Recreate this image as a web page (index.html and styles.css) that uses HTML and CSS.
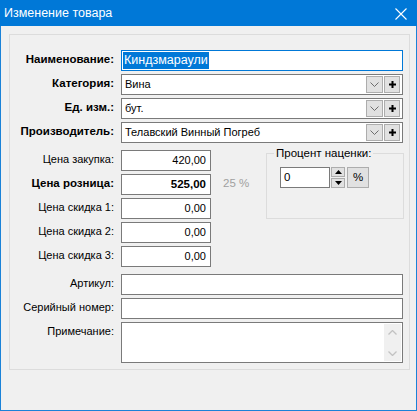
FILE: index.html
```html
<!DOCTYPE html>
<html lang="ru">
<head>
    <meta charset="UTF-8">
    <title>Изменение товара</title>
    <link rel="stylesheet" href="styles.css">
</head>
<body>

    <div class="window">
        <!-- Title bar -->
        <div class="titlebar">
            <span class="title">Изменение товара</span>
            <svg class="close" width="12" height="12" viewBox="0 0 12 12">
                <path d="M0.5 0.5 L11.5 11.5 M11.5 0.5 L0.5 11.5" stroke="#fff" stroke-width="1.1" fill="none"/>
            </svg>
        </div>

        <div class="group">
            <!-- Main fields -->
            <div class="form-rows">
                <div class="lbl bold">Наименование:</div>
                <div class="field focus"><span class="sel">Киндзмараули</span></div>

                <div class="lbl bold">Категория:</div>
                <div class="field combo">
                    <span class="val">Вина</span>
                    <span class="dd"><svg width="9" height="5" viewBox="0 0 9 5"><path d="M0.5 0.5 L4.5 4.5 L8.5 0.5" stroke="#6d6d6d" fill="none"/></svg></span>
                    <span class="plus"><svg width="7" height="7" viewBox="0 0 7 7"><path d="M0 2.5h7v2H0z M2.5 0h2v7h-2z" fill="#000"/></svg></span>
                </div>

                <div class="lbl bold">Ед. изм.:</div>
                <div class="field combo">
                    <span class="val">бут.</span>
                    <span class="dd"><svg width="9" height="5" viewBox="0 0 9 5"><path d="M0.5 0.5 L4.5 4.5 L8.5 0.5" stroke="#6d6d6d" fill="none"/></svg></span>
                    <span class="plus"><svg width="7" height="7" viewBox="0 0 7 7"><path d="M0 2.5h7v2H0z M2.5 0h2v7h-2z" fill="#000"/></svg></span>
                </div>

                <div class="lbl bold">Производитель:</div>
                <div class="field combo">
                    <span class="val">Телавский Винный Погреб</span>
                    <span class="dd"><svg width="9" height="5" viewBox="0 0 9 5"><path d="M0.5 0.5 L4.5 4.5 L8.5 0.5" stroke="#6d6d6d" fill="none"/></svg></span>
                    <span class="plus"><svg width="7" height="7" viewBox="0 0 7 7"><path d="M0 2.5h7v2H0z M2.5 0h2v7h-2z" fill="#000"/></svg></span>
                </div>
            </div>

            <!-- Prices -->
            <div class="prices">
                <fieldset class="markup">
                    <legend>Процент наценки:</legend>
                    <div class="markup-row">
                        <div class="field spin-val">0</div>
                        <div class="spin">
                            <span class="spin-btn"><svg width="7" height="4" viewBox="0 0 7 4"><path d="M0 4 L3.5 0 L7 4z" fill="#000"/></svg></span>
                            <span class="spin-btn"><svg width="7" height="4" viewBox="0 0 7 4"><path d="M0 0 L3.5 4 L7 0z" fill="#000"/></svg></span>
                        </div>
                        <div class="btn">%</div>
                    </div>
                </fieldset>

                <div class="lbl">Цена закупка:</div>
                <div class="field num">420,00</div>

                <div class="lbl bold">Цена розница:</div>
                <div class="field num bold">525,00</div>
                <div class="pct">25 %</div>

                <div class="lbl">Цена скидка 1:</div>
                <div class="field num">0,00</div>

                <div class="lbl">Цена скидка 2:</div>
                <div class="field num">0,00</div>

                <div class="lbl">Цена скидка 3:</div>
                <div class="field num">0,00</div>
            </div>

            <!-- Extra -->
            <div class="form-rows extra">
                <div class="lbl">Артикул:</div>
                <div class="field"></div>

                <div class="lbl">Серийный номер:</div>
                <div class="field"></div>

                <div class="lbl">Примечание:</div>
                <div class="field memo">
                    <div class="scrollbar">
                        <svg width="9" height="5" viewBox="0 0 9 5"><path d="M0.5 4.5 L4.5 0.5 L8.5 4.5" stroke="#c2c2c2" stroke-width="1.3" fill="none"/></svg>
                        <svg width="9" height="5" viewBox="0 0 9 5"><path d="M0.5 0.5 L4.5 4.5 L8.5 0.5" stroke="#c2c2c2" stroke-width="1.3" fill="none"/></svg>
                    </div>
                </div>
            </div>
        </div>
    </div>

</body>
</html>
```

FILE: styles.css
```css
body {
    margin: 0;
    padding: 0;
    font-family: 'Liberation Sans', Arial, sans-serif;
    font-size: 11px;
    color: #000;
}

/* Window */
.window {
    width: 417px;
    height: 411px;
    box-sizing: border-box;
    background: #f0f0f0;
    border: 1px solid #1a82d8;
    border-top: none;
}

.titlebar {
    height: 26px;
    margin: 0 -1px;
    background: #0078d7;
    display: flex;
    align-items: center;
    justify-content: space-between;
    padding: 0 10px 0 4px;
}

.title {
    color: #fff;
    font-size: 12.5px;
    padding-bottom: 1px;
}

.close {
    margin-top: 1px;
}

/* Group box */
.group {
    margin: 8px 6px 0 8px;
    height: 336px;
    box-sizing: border-box;
    border: 1px solid #dcdcdc;
    padding: 15px 6px 0 0;
}

.form-rows {
    display: grid;
    grid-template-columns: 111px 1fr;
    grid-auto-rows: 21px;
    row-gap: 3px;
}

.lbl {
    text-align: right;
    padding-right: 7px;
    line-height: 19px;
    white-space: nowrap;
}

.bold {
    font-weight: bold;
    font-size: 11.5px;
}

.field {
    box-sizing: border-box;
    height: 21px;
    background: #fff;
    border: 1px solid #7a7a7a;
    line-height: 19px;
    padding: 0 3px;
    white-space: nowrap;
    overflow: hidden;
}

.field.focus {
    border-color: #0078d7;
    padding: 1px 1px;
    line-height: 17px;
    font-size: 12.5px;
}

.sel {
    display: inline-block;
    background: #0078d7;
    color: #fff;
    padding: 0 1px;
}

.combo {
    display: flex;
    align-items: center;
    padding: 0 2px 0 3px;
}

.combo .val {
    flex-grow: 1;
}

.dd, .plus {
    box-sizing: border-box;
    height: 17px;
    background: #e1e1e1;
    border: 1px solid #adadad;
    display: flex;
    align-items: center;
    justify-content: center;
}

.dd {
    width: 17px;
}

.plus {
    width: 16px;
    margin-left: 1px;
}

/* Prices */
.prices {
    margin-top: 7px;
    display: grid;
    grid-template-columns: 111px 90px 55px 138px;
    grid-auto-rows: 21px;
    row-gap: 3px;
}

.prices .lbl {
    grid-column: 1;
}

.prices .num {
    grid-column: 2;
}

.num {
    text-align: right;
    padding-right: 4px;
}

.pct {
    grid-column: 3;
    color: #a0a0a0;
    padding-left: 12px;
    line-height: 19px;
    font-size: 11.5px;
}

.markup {
    grid-column: 4;
    grid-row: 1 / span 3;
    margin: -4px 0 0 0;
    padding: 0 0 0 13px;
    height: 73px;
    box-sizing: border-box;
    border: 1px solid #dcdcdc;
    min-width: 0;
}

.markup legend {
    padding: 0 2px;
    margin-left: -6px;
    line-height: 14px;
    font-size: 11.5px;
}

.markup-row {
    display: flex;
    margin-top: 7px;
}

.spin-val {
    width: 50px;
    line-height: 18px;
    font-size: 11.5px;
}

.spin {
    margin-left: 1px;
    display: flex;
    flex-direction: column;
    justify-content: space-between;
    height: 21px;
}

.spin-btn {
    box-sizing: border-box;
    width: 14px;
    height: 10px;
    background: #e1e1e1;
    border: 1px solid #adadad;
    display: flex;
    align-items: center;
    justify-content: center;
}

.btn {
    box-sizing: border-box;
    width: 22px;
    height: 21px;
    margin-left: 2px;
    background: #e1e1e1;
    border: 1px solid #adadad;
    text-align: center;
    line-height: 19px;
    font-size: 11.5px;
}

/* Extra fields */
.extra {
    margin-top: 7px;
}

.memo {
    height: 41px;
    grid-row: span 2;
    display: flex;
    justify-content: flex-end;
    padding: 1px;
}

.scrollbar {
    width: 17px;
    background: #f0f0f0;
    display: flex;
    flex-direction: column;
    justify-content: space-between;
    align-items: center;
    padding: 6px 0 5px;
    box-sizing: border-box;
}
```
